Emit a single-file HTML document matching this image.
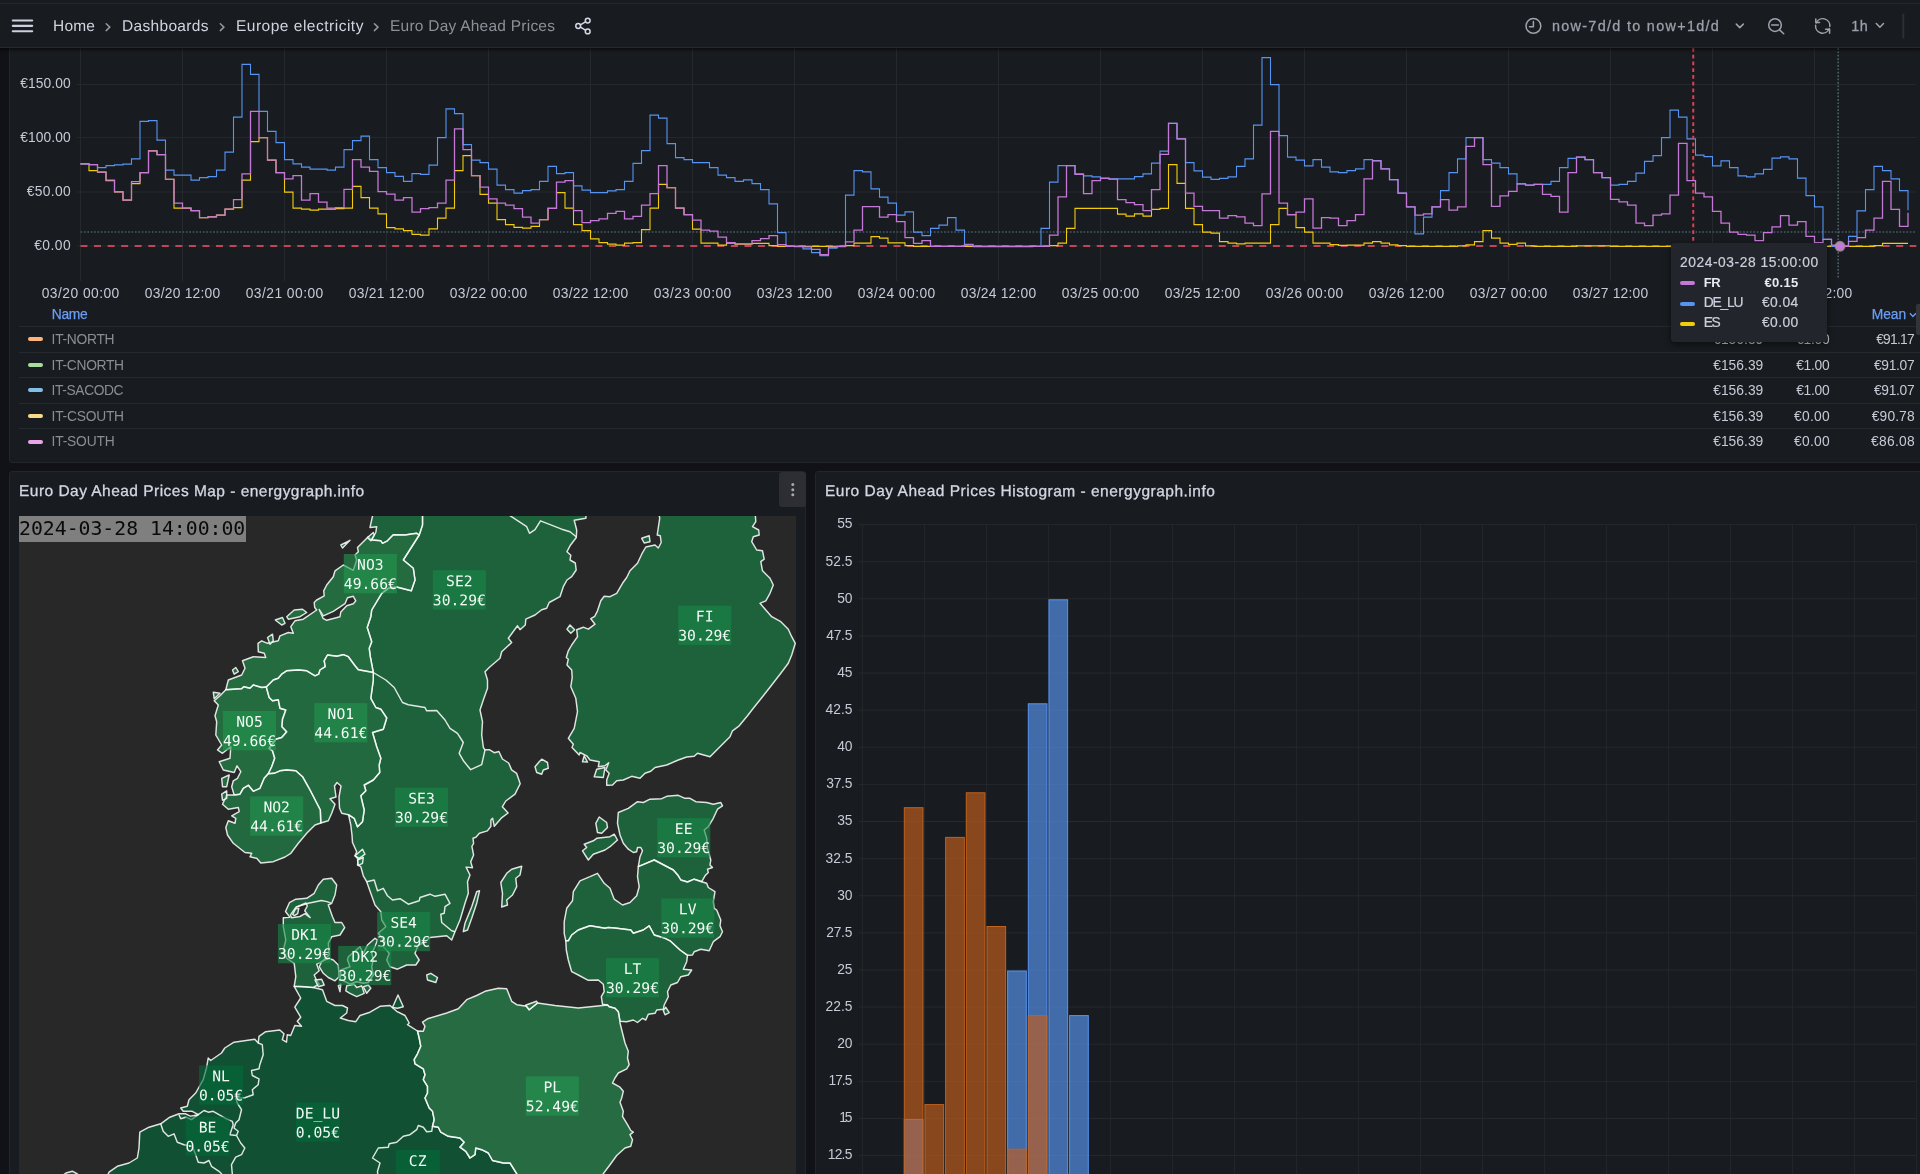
<!DOCTYPE html><html lang="en"><head><meta charset="utf-8"><title>Euro Day Ahead Prices - Grafana</title><style>
*{box-sizing:border-box}
html,body{margin:0;padding:0}
body{width:1920px;height:1174px;overflow:hidden;background:#111217;font-family:"Liberation Sans",sans-serif;color:#ccccdc;position:relative}
#root{position:absolute;left:0;top:0;width:1920px;height:1174px;overflow:hidden;will-change:transform}
.abs{position:absolute}
.t{position:absolute;white-space:nowrap;line-height:1}
.panel{position:absolute;background:#181b1f;border:1px solid #22252a}
#topbar{left:0;top:0;width:1920px;height:47.8px;background:#181b1f;border-bottom:1px solid #25282e;box-shadow:0 1px 3px 1px rgba(0,0,0,.55)}
.bc{font-size:15px;letter-spacing:.35px;top:18px;color:#d0d1dc}
.bcsep{font-size:15px;top:17px;color:#8e9097}
.ax{font-size:13px;letter-spacing:.45px;color:#c7c8d6}
.leg{font-size:13px;letter-spacing:.3px;color:#9fa1a9}
.legv{font-size:13px;letter-spacing:.45px;color:#c7c8d6;text-align:right}
.sw{position:absolute;width:15px;height:4px;border-radius:2px}
.sep{position:absolute;left:19px;width:1901px;height:1px;background:#25282d}
.ptitle{font-size:15px;font-weight:bold;letter-spacing:.1px;color:#d5d6e2}
.ml{position:absolute;font-family:"DejaVu Sans Mono","Liberation Mono",monospace;font-size:14px;line-height:19.3px;color:#fff;text-align:center;width:54px;height:39px;white-space:pre}
.hy{font-size:13px;letter-spacing:.5px;color:#c7c8d6;text-align:right;width:40px}
</style></head><body><div id="root">
<div class="panel" style="left:9.2px;top:40px;width:1920px;height:423.1px;border-radius:3px"></div>
<svg class="abs" style="left:0;top:0" width="1920" height="480" viewBox="0 0 1920 480"><line x1="80.5" y1="48" x2="80.5" y2="281" stroke="#25282d" stroke-width="1"/><line x1="182.5" y1="48" x2="182.5" y2="281" stroke="#25282d" stroke-width="1"/><line x1="284.5" y1="48" x2="284.5" y2="281" stroke="#25282d" stroke-width="1"/><line x1="386.5" y1="48" x2="386.5" y2="281" stroke="#25282d" stroke-width="1"/><line x1="488.5" y1="48" x2="488.5" y2="281" stroke="#25282d" stroke-width="1"/><line x1="590.5" y1="48" x2="590.5" y2="281" stroke="#25282d" stroke-width="1"/><line x1="692.5" y1="48" x2="692.5" y2="281" stroke="#25282d" stroke-width="1"/><line x1="794.5" y1="48" x2="794.5" y2="281" stroke="#25282d" stroke-width="1"/><line x1="896.5" y1="48" x2="896.5" y2="281" stroke="#25282d" stroke-width="1"/><line x1="998.5" y1="48" x2="998.5" y2="281" stroke="#25282d" stroke-width="1"/><line x1="1100.5" y1="48" x2="1100.5" y2="281" stroke="#25282d" stroke-width="1"/><line x1="1202.5" y1="48" x2="1202.5" y2="281" stroke="#25282d" stroke-width="1"/><line x1="1304.5" y1="48" x2="1304.5" y2="281" stroke="#25282d" stroke-width="1"/><line x1="1406.5" y1="48" x2="1406.5" y2="281" stroke="#25282d" stroke-width="1"/><line x1="1508.5" y1="48" x2="1508.5" y2="281" stroke="#25282d" stroke-width="1"/><line x1="1610.5" y1="48" x2="1610.5" y2="281" stroke="#25282d" stroke-width="1"/><line x1="1712.5" y1="48" x2="1712.5" y2="281" stroke="#25282d" stroke-width="1"/><line x1="1814.5" y1="48" x2="1814.5" y2="281" stroke="#25282d" stroke-width="1"/><line x1="76.7" y1="84.50" x2="1916.3" y2="84.50" stroke="#25282d" stroke-width="1"/><line x1="76.7" y1="137.60" x2="1916.3" y2="137.60" stroke="#25282d" stroke-width="1"/><line x1="76.7" y1="192.00" x2="1916.3" y2="192.00" stroke="#25282d" stroke-width="1"/><line x1="76.7" y1="245.90" x2="1916.3" y2="245.90" stroke="#25282d" stroke-width="1"/><line x1="80.5" y1="231.9" x2="1916.3" y2="231.9" stroke="#3a4a52" stroke-width="2" stroke-dasharray="1.7 1.7"/><line x1="80.5" y1="246" x2="1916.3" y2="246" stroke="#c04556" stroke-width="2" stroke-dasharray="7 6.55"/><path d="M80.5 163.90H89.0V170.65H97.5V172.15H106.0V180.65H114.5V191.90H123.0V200.15H131.5V183.65H140.0V172.65H148.5V150.90H157.0V154.65H165.5V179.40H174.0V208.15H182.5V208.15H191.0V210.65H199.5V217.65H208.0V216.90H216.5V215.15H225.0V209.15H233.5V207.65H242.0V180.15H250.5V141.65H259.0V137.65H267.5V160.15H276.0V172.65H284.5V192.15H293.0V208.15H301.5V209.15H310.0V210.15H318.5V209.15H327.0V209.15H335.5V208.65H344.0V208.15H352.5V186.40H361.0V197.65H369.5V208.15H378.0V213.90H386.5V227.65H395.0V228.90H403.5V230.65H412.0V234.40H420.5V235.15H429.0V228.90H437.5V218.15H446.0V208.15H454.5V170.65H463.0V155.65H471.5V175.65H480.0V194.40H488.5V203.15H497.0V219.65H505.5V224.65H514.0V227.40H522.5V228.15H531.0V226.40H539.5V219.65H548.0V208.40H556.5V192.65H565.0V208.15H573.5V224.65H582.0V230.65H590.5V238.90H599.0V242.65H607.5V244.15H616.0V245.15H624.5V243.15H633.0V242.65H641.5V229.65H650.0V208.15H658.5V184.40H667.0V187.65H675.5V208.15H684.0V214.65H692.5V229.15H701.0V243.15H709.5V243.15H718.0V245.15H726.5V243.15H735.0V244.15H743.5V244.15H752.0V243.40H760.5V243.40H769.0V245.65H777.5V246.40H786.0V246.40H794.5V246.40H803.0V246.40H811.5V246.40H820.0V246.40H828.5V246.40H837.0V246.40H845.5V245.65H854.0V243.15H862.5V243.15H871.0V236.65H879.5V238.15H888.0V242.90H896.5V242.90H905.0V245.65H913.5V246.40H922.0V246.40H930.5V246.40H939.0V246.40H947.5V246.40H956.0V246.40H964.5V246.40H973.0V246.40H981.5V246.40H990.0V246.40H998.5V246.40H1007.0V246.40H1015.5V246.40H1024.0V246.40H1032.5V246.40H1041.0V246.40H1049.5V245.65H1058.0V243.15H1066.5V228.40H1075.0V208.40H1083.5V208.40H1092.0V208.40H1100.5V208.40H1109.0V208.40H1117.5V214.15H1126.0V216.15H1134.5V213.90H1143.0V216.15H1151.5V209.40H1160.0V208.40H1168.5V164.65H1177.0V183.40H1185.5V208.40H1194.0V224.65H1202.5V232.15H1211.0V233.15H1219.5V241.65H1228.0V243.15H1236.5V243.90H1245.0V243.15H1253.5V243.15H1262.0V243.15H1270.5V224.65H1279.0V208.40H1287.5V214.65H1296.0V227.65H1304.5V232.15H1313.0V243.15H1321.5V243.15H1330.0V244.65H1338.5V245.40H1347.0V245.15H1355.5V245.15H1364.0V243.15H1372.5V241.65H1381.0V243.15H1389.5V244.90H1398.0V245.65H1406.5V246.40H1415.0V246.40H1423.5V246.40H1432.0V246.40H1440.5V246.40H1449.0V246.40H1457.5V245.90H1466.0V244.90H1474.5V241.65H1483.0V230.65H1491.5V238.15H1500.0V243.15H1508.5V244.40H1517.0V243.15H1525.5V245.90H1534.0V246.40H1542.5V246.40H1551.0V246.40H1559.5V246.40H1568.0V246.40H1576.5V245.90H1585.0V245.90H1593.5V245.90H1602.0V245.90H1610.5V246.40H1619.0V246.40H1627.5V246.40H1636.0V246.40H1644.5V246.40H1653.0V246.40H1661.5V246.40H1670.0V246.40H1678.5V246.40H1687.0V246.40H1695.5V246.40H1704.0V246.40H1712.5V246.40H1721.0V246.40H1729.5V246.40H1738.0V246.40H1746.5V246.40H1755.0V246.40H1763.5V246.40H1772.0V246.40H1780.5V246.40H1789.0V246.40H1797.5V246.40H1806.0V246.40H1814.5V246.40H1823.0V246.40H1831.5V246.40H1840.0V246.40H1848.5V246.40H1857.0V246.40H1865.5V246.40H1874.0V245.65H1882.5V243.40H1891.0V243.40H1899.5V243.40H1908.0" fill="none" stroke="#f2cc0c" stroke-width="1.1"/><path d="M80.5 163.90H89.0V164.65H97.5V167.65H106.0V165.65H114.5V164.90H123.0V164.15H131.5V158.90H140.0V121.40H148.5V120.65H157.0V140.15H165.5V170.15H174.0V175.15H182.5V175.15H191.0V180.15H199.5V177.65H208.0V176.65H216.5V170.15H225.0V152.15H233.5V117.15H242.0V64.40H250.5V74.40H259.0V111.40H267.5V131.40H276.0V142.65H284.5V159.65H293.0V163.90H301.5V167.15H310.0V169.15H318.5V169.15H327.0V170.15H335.5V167.15H344.0V149.65H352.5V140.65H361.0V136.15H369.5V159.65H378.0V167.65H386.5V172.65H395.0V176.40H403.5V181.40H412.0V173.65H420.5V174.40H429.0V165.15H437.5V137.65H446.0V108.90H454.5V113.65H463.0V144.65H471.5V160.15H480.0V162.65H488.5V169.15H497.0V185.15H505.5V189.65H514.0V193.15H522.5V190.65H531.0V189.65H539.5V181.40H548.0V166.40H556.5V173.65H565.0V172.65H573.5V185.90H582.0V190.15H590.5V192.65H599.0V192.65H607.5V190.90H616.0V189.65H624.5V181.40H633.0V163.40H641.5V150.65H650.0V115.15H658.5V118.15H667.0V143.65H675.5V157.65H684.0V159.65H692.5V162.65H701.0V162.65H709.5V167.65H718.0V175.15H726.5V177.65H735.0V181.40H743.5V179.90H752.0V183.65H760.5V189.65H769.0V203.90H777.5V232.65H786.0V245.90H794.5V246.65H803.0V248.90H811.5V252.65H820.0V255.65H828.5V248.15H837.0V246.65H845.5V195.15H854.0V170.65H862.5V171.90H871.0V188.90H879.5V197.15H888.0V203.15H896.5V215.15H905.0V211.90H913.5V232.15H922.0V235.65H930.5V228.40H939.0V225.15H947.5V217.65H956.0V230.15H964.5V244.40H973.0V246.40H981.5V246.40H990.0V246.40H998.5V246.40H1007.0V246.40H1015.5V246.40H1024.0V246.40H1032.5V246.40H1041.0V228.40H1049.5V182.15H1058.0V165.65H1066.5V165.65H1075.0V173.90H1083.5V175.90H1092.0V176.90H1100.5V178.15H1109.0V178.90H1117.5V178.90H1126.0V178.90H1134.5V176.65H1143.0V173.90H1151.5V163.15H1160.0V151.15H1168.5V123.40H1177.0V138.90H1185.5V162.65H1194.0V170.90H1202.5V177.15H1211.0V179.40H1219.5V178.40H1228.0V176.90H1236.5V166.40H1245.0V158.90H1253.5V125.15H1262.0V57.65H1270.5V84.65H1279.0V135.65H1287.5V157.15H1296.0V160.15H1304.5V165.90H1313.0V159.65H1321.5V167.15H1330.0V171.90H1338.5V172.65H1347.0V170.65H1355.5V168.90H1364.0V159.65H1372.5V160.65H1381.0V168.90H1389.5V179.65H1398.0V193.15H1406.5V206.90H1415.0V233.90H1423.5V217.15H1432.0V206.90H1440.5V190.65H1449.0V172.65H1457.5V158.90H1466.0V137.65H1474.5V137.65H1483.0V159.65H1491.5V163.15H1500.0V167.65H1508.5V173.90H1517.0V183.90H1525.5V185.15H1534.0V184.40H1542.5V184.40H1551.0V181.40H1559.5V167.65H1568.0V158.40H1576.5V157.15H1585.0V159.65H1593.5V172.65H1602.0V177.65H1610.5V185.15H1619.0V184.40H1627.5V181.40H1636.0V173.15H1644.5V161.40H1653.0V155.65H1661.5V137.65H1670.0V110.15H1678.5V117.15H1687.0V138.90H1695.5V155.15H1704.0V156.65H1712.5V165.90H1721.0V160.90H1729.5V167.65H1738.0V175.90H1746.5V176.90H1755.0V173.90H1763.5V169.40H1772.0V158.15H1780.5V156.90H1789.0V158.90H1797.5V178.15H1806.0V195.65H1814.5V206.90H1823.0V239.40H1831.5V246.40H1840.0V246.40H1848.5V236.40H1857.0V210.90H1865.5V189.65H1874.0V166.40H1882.5V170.65H1891.0V178.90H1899.5V190.65H1908.0V210.15" fill="none" stroke="#5794f2" stroke-width="1.1"/><path d="M80.5 163.90H89.0V164.65H97.5V172.15H106.0V180.15H114.5V191.90H123.0V200.15H131.5V181.65H140.0V172.65H148.5V150.90H157.0V154.65H165.5V179.40H174.0V203.15H182.5V208.15H191.0V210.65H199.5V217.65H208.0V216.90H216.5V215.15H225.0V209.15H233.5V199.65H242.0V173.90H250.5V111.40H259.0V137.65H267.5V160.15H276.0V172.65H284.5V178.90H293.0V175.65H301.5V200.15H310.0V193.65H318.5V202.15H327.0V208.15H335.5V207.65H344.0V189.40H352.5V159.65H361.0V167.15H369.5V171.40H378.0V191.65H386.5V194.15H395.0V200.15H403.5V197.65H412.0V212.15H420.5V208.65H429.0V207.65H437.5V203.15H446.0V180.15H454.5V128.90H463.0V149.65H471.5V175.65H480.0V187.15H488.5V198.90H497.0V203.15H505.5V205.15H514.0V208.65H522.5V217.15H531.0V223.15H539.5V219.65H548.0V208.40H556.5V182.15H565.0V180.65H573.5V210.65H582.0V222.65H590.5V220.65H599.0V218.90H607.5V213.40H616.0V211.40H624.5V218.90H633.0V216.40H641.5V205.15H650.0V193.65H658.5V165.65H667.0V187.65H675.5V208.15H684.0V214.65H692.5V220.15H701.0V230.15H709.5V231.15H718.0V237.15H726.5V242.65H735.0V243.90H743.5V243.90H752.0V240.65H760.5V238.65H769.0V235.65H777.5V244.65H786.0V246.40H794.5V246.40H803.0V246.90H811.5V249.40H820.0V254.65H828.5V247.15H837.0V246.40H845.5V241.90H854.0V230.15H862.5V206.65H871.0V206.65H879.5V217.15H888.0V214.65H896.5V221.65H905.0V237.65H913.5V243.40H922.0V240.65H930.5V246.40H939.0V246.40H947.5V246.40H956.0V246.40H964.5V244.90H973.0V246.65H981.5V246.65H990.0V246.65H998.5V246.65H1007.0V246.65H1015.5V246.65H1024.0V246.65H1032.5V246.40H1041.0V246.40H1049.5V235.15H1058.0V196.90H1066.5V165.65H1075.0V174.40H1083.5V193.65H1092.0V180.65H1100.5V178.40H1109.0V179.15H1117.5V199.65H1126.0V202.65H1134.5V204.65H1143.0V210.65H1151.5V189.65H1160.0V154.40H1168.5V123.40H1177.0V138.90H1185.5V193.15H1194.0V206.40H1202.5V210.65H1211.0V210.65H1219.5V218.15H1228.0V215.65H1236.5V216.90H1245.0V223.15H1253.5V225.65H1262.0V193.90H1270.5V131.40H1279.0V203.15H1287.5V214.65H1296.0V212.15H1304.5V198.90H1313.0V228.15H1321.5V217.65H1330.0V218.15H1338.5V225.65H1347.0V220.65H1355.5V214.65H1364.0V178.90H1372.5V160.90H1381.0V168.90H1389.5V179.65H1398.0V193.15H1406.5V206.90H1415.0V215.15H1423.5V213.90H1432.0V206.90H1440.5V199.65H1449.0V210.15H1457.5V206.90H1466.0V146.40H1474.5V137.65H1483.0V164.65H1491.5V206.40H1500.0V195.90H1508.5V191.40H1517.0V183.90H1525.5V185.15H1534.0V184.40H1542.5V194.40H1551.0V196.40H1559.5V212.15H1568.0V172.65H1576.5V157.15H1585.0V159.65H1593.5V172.65H1602.0V177.65H1610.5V199.40H1619.0V201.90H1627.5V205.15H1636.0V223.15H1644.5V225.65H1653.0V215.15H1661.5V213.90H1670.0V195.15H1678.5V143.40H1687.0V180.65H1695.5V193.15H1704.0V196.90H1712.5V211.40H1721.0V223.15H1729.5V232.15H1738.0V234.40H1746.5V235.15H1755.0V240.65H1763.5V232.65H1772.0V226.90H1780.5V215.65H1789.0V225.15H1797.5V221.65H1806.0V236.40H1814.5V242.65H1823.0V239.40H1831.5V245.15H1840.0V246.40H1848.5V241.40H1857.0V237.65H1865.5V230.15H1874.0V218.15H1882.5V181.40H1891.0V209.40H1899.5V226.40H1908.0V212.65" fill="none" stroke="#c678d8" stroke-width="1.3"/><line x1="1693.25" y1="48" x2="1693.25" y2="245" stroke="#d74155" stroke-width="2" stroke-dasharray="3.7 3.05"/><line x1="1838.2" y1="48" x2="1838.2" y2="278" stroke="#4b5f64" stroke-width="1.6" stroke-dasharray="1.7 1.7"/><circle cx="1840" cy="246.3" r="4.5" fill="#c678d8" stroke="#a98fa0" stroke-opacity=".75" stroke-width="2"/></svg>
<div class="t" style="left:-329.30px;width:400.09px;text-align:right;top:76.90px;font-size:13.8px;letter-spacing:0.085px;color:#c8c9d6;">€150.00</div>
<div class="t" style="left:-329.30px;width:400.09px;text-align:right;top:130.90px;font-size:13.8px;letter-spacing:0.085px;color:#c8c9d6;">€100.00</div>
<div class="t" style="left:-329.30px;width:400.35px;text-align:right;top:184.90px;font-size:13.8px;letter-spacing:0.354px;color:#c8c9d6;">€50.00</div>
<div class="t" style="left:-329.30px;width:400.51px;text-align:right;top:238.90px;font-size:13.8px;letter-spacing:0.508px;color:#c8c9d6;">€0.00</div>
<div class="t" style="left:-69.27px;width:300px;text-align:center;top:286.90px;font-size:13.8px;letter-spacing:0.467px;color:#c8c9d6">03/20 00:00</div>
<div class="t" style="left:32.62px;width:300px;text-align:center;top:286.90px;font-size:13.8px;letter-spacing:0.247px;color:#c8c9d6">03/20 12:00</div>
<div class="t" style="left:134.73px;width:300px;text-align:center;top:286.90px;font-size:13.8px;letter-spacing:0.467px;color:#c8c9d6">03/21 00:00</div>
<div class="t" style="left:236.62px;width:300px;text-align:center;top:286.90px;font-size:13.8px;letter-spacing:0.247px;color:#c8c9d6">03/21 12:00</div>
<div class="t" style="left:338.73px;width:300px;text-align:center;top:286.90px;font-size:13.8px;letter-spacing:0.467px;color:#c8c9d6">03/22 00:00</div>
<div class="t" style="left:440.62px;width:300px;text-align:center;top:286.90px;font-size:13.8px;letter-spacing:0.247px;color:#c8c9d6">03/22 12:00</div>
<div class="t" style="left:542.73px;width:300px;text-align:center;top:286.90px;font-size:13.8px;letter-spacing:0.467px;color:#c8c9d6">03/23 00:00</div>
<div class="t" style="left:644.62px;width:300px;text-align:center;top:286.90px;font-size:13.8px;letter-spacing:0.247px;color:#c8c9d6">03/23 12:00</div>
<div class="t" style="left:746.73px;width:300px;text-align:center;top:286.90px;font-size:13.8px;letter-spacing:0.467px;color:#c8c9d6">03/24 00:00</div>
<div class="t" style="left:848.62px;width:300px;text-align:center;top:286.90px;font-size:13.8px;letter-spacing:0.247px;color:#c8c9d6">03/24 12:00</div>
<div class="t" style="left:950.73px;width:300px;text-align:center;top:286.90px;font-size:13.8px;letter-spacing:0.467px;color:#c8c9d6">03/25 00:00</div>
<div class="t" style="left:1052.62px;width:300px;text-align:center;top:286.90px;font-size:13.8px;letter-spacing:0.247px;color:#c8c9d6">03/25 12:00</div>
<div class="t" style="left:1154.73px;width:300px;text-align:center;top:286.90px;font-size:13.8px;letter-spacing:0.467px;color:#c8c9d6">03/26 00:00</div>
<div class="t" style="left:1256.62px;width:300px;text-align:center;top:286.90px;font-size:13.8px;letter-spacing:0.247px;color:#c8c9d6">03/26 12:00</div>
<div class="t" style="left:1358.73px;width:300px;text-align:center;top:286.90px;font-size:13.8px;letter-spacing:0.467px;color:#c8c9d6">03/27 00:00</div>
<div class="t" style="left:1460.62px;width:300px;text-align:center;top:286.90px;font-size:13.8px;letter-spacing:0.247px;color:#c8c9d6">03/27 12:00</div>
<div class="t" style="left:1562.73px;width:300px;text-align:center;top:286.90px;font-size:13.8px;letter-spacing:0.467px;color:#c8c9d6">03/28 00:00</div>
<div class="t" style="left:1664.62px;width:300px;text-align:center;top:286.90px;font-size:13.8px;letter-spacing:0.247px;color:#c8c9d6">03/28 12:00</div>
<div class="t" style="left:51.80px;top:307.90px;font-size:13.8px;letter-spacing:-0.282px;color:#6a9df5;-webkit-text-stroke:.25px #6a9df5;">Name</div>
<div class="t" style="left:1506.10px;width:399.90px;text-align:right;top:307.90px;font-size:13.8px;letter-spacing:-0.100px;color:#6a9df5;-webkit-text-stroke:.25px #6a9df5;">Mean</div>
<svg class="abs" style="left:1908px;top:310px" width="10" height="9" viewBox="0 0 10 9"><path d="M1.9 3.3 L4.9 6.4 L7.9 3.3" fill="none" stroke="#6a9df5" stroke-width="1.4"/></svg>
<div class="sep" style="top:326.00px"></div>
<div class="sw" style="left:27.8px;top:337.30px;background:#ffb27a"></div>
<div class="t" style="left:51.60px;top:332.90px;font-size:13.8px;letter-spacing:-0.276px;color:#8b8d95;">IT-NORTH</div>
<div class="t" style="left:1363.30px;width:400.04px;text-align:right;top:332.90px;font-size:13.8px;letter-spacing:0.035px;color:#c8c9d6;">€156.39</div>
<div class="t" style="left:1429.60px;width:399.71px;text-align:right;top:332.90px;font-size:13.8px;letter-spacing:-0.292px;color:#c8c9d6;">€1.00</div>
<div class="t" style="left:1514.60px;width:399.23px;text-align:right;top:332.90px;font-size:13.8px;letter-spacing:-0.766px;color:#c8c9d6;">€91.17</div>
<div class="sep" style="top:351.55px"></div>
<div class="sw" style="left:27.8px;top:362.85px;background:#a8dc9c"></div>
<div class="t" style="left:51.60px;top:358.90px;font-size:13.8px;letter-spacing:-0.296px;color:#8b8d95;">IT-CNORTH</div>
<div class="t" style="left:1363.30px;width:400.04px;text-align:right;top:358.90px;font-size:13.8px;letter-spacing:0.035px;color:#c8c9d6;">€156.39</div>
<div class="t" style="left:1429.60px;width:399.71px;text-align:right;top:358.90px;font-size:13.8px;letter-spacing:-0.292px;color:#c8c9d6;">€1.00</div>
<div class="t" style="left:1514.60px;width:399.67px;text-align:right;top:358.90px;font-size:13.8px;letter-spacing:-0.326px;color:#c8c9d6;">€91.07</div>
<div class="sep" style="top:377.10px"></div>
<div class="sw" style="left:27.8px;top:388.40px;background:#82bfe6"></div>
<div class="t" style="left:51.60px;top:383.90px;font-size:13.8px;letter-spacing:-0.393px;color:#8b8d95;">IT-SACODC</div>
<div class="t" style="left:1363.30px;width:400.04px;text-align:right;top:383.90px;font-size:13.8px;letter-spacing:0.035px;color:#c8c9d6;">€156.39</div>
<div class="t" style="left:1429.60px;width:399.71px;text-align:right;top:383.90px;font-size:13.8px;letter-spacing:-0.292px;color:#c8c9d6;">€1.00</div>
<div class="t" style="left:1514.60px;width:399.67px;text-align:right;top:383.90px;font-size:13.8px;letter-spacing:-0.326px;color:#c8c9d6;">€91.07</div>
<div class="sep" style="top:402.65px"></div>
<div class="sw" style="left:27.8px;top:413.95px;background:#fbd98a"></div>
<div class="t" style="left:51.60px;top:409.90px;font-size:13.8px;letter-spacing:-0.235px;color:#8b8d95;">IT-CSOUTH</div>
<div class="t" style="left:1363.30px;width:400.04px;text-align:right;top:409.90px;font-size:13.8px;letter-spacing:0.035px;color:#c8c9d6;">€156.39</div>
<div class="t" style="left:1429.60px;width:400.26px;text-align:right;top:409.90px;font-size:13.8px;letter-spacing:0.258px;color:#c8c9d6;">€0.00</div>
<div class="t" style="left:1514.60px;width:400.11px;text-align:right;top:409.90px;font-size:13.8px;letter-spacing:0.114px;color:#c8c9d6;">€90.78</div>
<div class="sep" style="top:428.20px"></div>
<div class="sw" style="left:27.8px;top:439.50px;background:#eaa5e6"></div>
<div class="t" style="left:51.60px;top:434.90px;font-size:13.8px;letter-spacing:-0.197px;color:#8b8d95;">IT-SOUTH</div>
<div class="t" style="left:1363.30px;width:400.04px;text-align:right;top:434.90px;font-size:13.8px;letter-spacing:0.035px;color:#c8c9d6;">€156.39</div>
<div class="t" style="left:1429.60px;width:400.26px;text-align:right;top:434.90px;font-size:13.8px;letter-spacing:0.258px;color:#c8c9d6;">€0.00</div>
<div class="t" style="left:1514.60px;width:400.25px;text-align:right;top:434.90px;font-size:13.8px;letter-spacing:0.254px;color:#c8c9d6;">€86.08</div>
<div class="abs" style="left:1916px;top:303.5px;width:8px;height:31.5px;border-radius:2px;background:#32343a"></div>
<div class="abs" style="left:1671.2px;top:242.5px;width:156px;height:99px;background:#22252b;border-radius:3px;box-shadow:0 2px 6px rgba(0,0,0,.55)"></div>
<div class="t" style="left:1680.00px;top:255.90px;font-size:13.8px;letter-spacing:0.554px;color:#cdcedc;-webkit-text-stroke:.2px #cdcedc;">2024-03-28 15:00:00</div>
<div class="sw" style="left:1680px;top:281.40px;background:#c678d8"></div>
<div class="t" style="left:1703.70px;top:276.30px;font-size:13.0px;letter-spacing:-0.350px;color:#e8e9f2;font-weight:bold;">FR</div>
<div class="t" style="left:1398.20px;width:400.31px;text-align:right;top:276.30px;font-size:13.0px;letter-spacing:0.309px;color:#e8e9f2;font-weight:bold;">€0.15</div>
<div class="sw" style="left:1680px;top:301.60px;background:#5794f2"></div>
<div class="t" style="left:1703.70px;top:295.90px;font-size:13.8px;letter-spacing:-1.201px;color:#cdcedc;-webkit-text-stroke:.2px #cdcedc;">DE_LU</div>
<div class="t" style="left:1398.20px;width:400.41px;text-align:right;top:295.90px;font-size:13.8px;letter-spacing:0.408px;color:#cdcedc;-webkit-text-stroke:.2px #cdcedc;">€0.04</div>
<div class="sw" style="left:1680px;top:321.90px;background:#f2cc0c"></div>
<div class="t" style="left:1703.70px;top:315.90px;font-size:13.8px;letter-spacing:-1.423px;color:#cdcedc;-webkit-text-stroke:.2px #cdcedc;">ES</div>
<div class="t" style="left:1398.20px;width:400.41px;text-align:right;top:315.90px;font-size:13.8px;letter-spacing:0.408px;color:#cdcedc;-webkit-text-stroke:.2px #cdcedc;">€0.00</div>
<div id="topbar" class="abs"></div>
<div class="abs" style="left:0;top:2.9px;width:1920px;height:1px;background:#25272d"></div>
<svg class="abs" style="left:0;top:0" width="1920" height="48" viewBox="0 0 1920 48" fill="none" stroke-linecap="round" stroke-linejoin="round"><g stroke="#cfcedf" stroke-width="2.1" stroke-linecap="round"><path d="M12.8 20.45H32.2M12.8 25.85H32.2M12.8 31.25H32.2"/></g><g stroke="#9496a3" stroke-width="1.5"><path d="M106.2 23.7l3.6 3.45-3.6 3.45M220.3 23.7l3.6 3.45-3.6 3.45M374.4 23.7l3.6 3.45-3.6 3.45"/></g><g stroke="#d7d6e4" stroke-width="1.5"><circle cx="587.7" cy="20.6" r="2.4"/><circle cx="587.7" cy="31.4" r="2.4"/><circle cx="578.2" cy="26" r="2.4"/><path d="M580.4 24.8l5.1-3M580.4 27.2l5.1 3"/></g><g stroke="#a0a2ad" stroke-width="1.5"><circle cx="1533.4" cy="25.9" r="7.4"/><path d="M1533.4 21.6V26.7H1529.5"/></g><g stroke="#a0a2ad" stroke-width="1.5"><path d="M1736.3 24.1l3.5 3.5 3.5-3.5M1876.3 23.5l3.6 3.7 3.6-3.7"/></g><g stroke="#a0a2ad" stroke-width="1.5"><circle cx="1775" cy="25.1" r="6.3"/><path d="M1771.6 25.1H1778.4M1779.6 29.9L1783.7 33.7"/></g><g stroke="#a0a2ad" stroke-width="1.5"><path d="M1815.8 18.9V22.6H1819.6M1829.6 33.3V29.3H1825.6"/><path d="M1816.2 23A7.1 7.1 0 0 1 1829.8 26.5M1829.2 28.8A7.1 7.1 0 0 1 1815.6 25.3"/></g><path d="M1903.3 13.8V38.4" stroke="#2d2f36" stroke-width="2" stroke-linecap="butt"/></svg>
<div class="t" style="left:53.00px;top:17.85px;font-size:15.5px;letter-spacing:0.205px;color:#d2d3de;transform:rotate(.04deg);transform-origin:0 50%;">Home</div>
<div class="t" style="left:122.20px;top:17.85px;font-size:15.5px;letter-spacing:0.317px;color:#d2d3de;transform:rotate(.04deg);transform-origin:0 50%;">Dashboards</div>
<div class="t" style="left:235.50px;top:17.85px;font-size:15.5px;letter-spacing:0.501px;color:#d2d3de;transform:rotate(.04deg);transform-origin:0 50%;">Europe electricity</div>
<div class="t" style="left:390.00px;top:17.85px;font-size:15.5px;letter-spacing:0.236px;color:#8e8f98;transform:rotate(.04deg);transform-origin:0 50%;">Euro Day Ahead Prices</div>
<div class="t" style="left:1551.90px;top:19.10px;font-size:14.4px;letter-spacing:1.314px;color:#9d9faa;-webkit-text-stroke:.3px #9d9faa;">now-7d/d to now+1d/d</div>
<div class="t" style="left:1851.20px;top:19.10px;font-size:14.4px;letter-spacing:0.500px;color:#9d9faa;-webkit-text-stroke:.3px #9d9faa;">1h</div>
<div class="panel" style="left:9.2px;top:471.4px;width:796.8px;height:720px;border-radius:3px"></div>
<div class="t" style="left:19.20px;top:482.95px;font-size:15.5px;letter-spacing:0.470px;color:#d5d6e2;-webkit-text-stroke:.3px #d5d6e2;transform:rotate(.04deg);transform-origin:0 50%;">Euro Day Ahead Prices Map - energygraph.info</div>
<div class="abs" style="left:779px;top:471.6px;width:27px;height:35px;background:#2c2e34;border-radius:3px"></div>
<svg class="abs" style="left:779px;top:472px" width="27" height="35"><g fill="#a6a8b6"><circle cx="13.8" cy="12.5" r="1.5"/><circle cx="13.8" cy="17.7" r="1.5"/><circle cx="13.8" cy="22.8" r="1.5"/></g></svg>
<div class="abs" style="left:19px;top:515.8px;width:776.9px;height:660px;background:#282828;overflow:hidden">
<svg style="position:absolute;left:0;top:0" width="777" height="660" viewBox="19 516 777 660"><g stroke="#ffffff" stroke-width="1.45" stroke-opacity=".86" stroke-linejoin="round"><polygon points="422.5,510.0 422.5,525.0 419.2,535.0 403.3,560.0 413.3,568.3 415.0,580.0 411.3,590.8 396.7,587.0 388.3,588.3 381.7,593.3 371.7,610.0 370.8,616.7 367.2,627.5 371.7,641.7 369.2,648.3 370.3,656.7 373.3,672.5 373.3,680.0 370.8,698.3 375.8,707.5 380.8,709.2 386.7,718.0 383.3,729.2 372.5,732.5 376.7,746.7 380.8,758.3 379.2,765.0 379.7,772.5 373.3,780.0 364.2,785.0 365.8,790.8 360.8,795.8 364.2,810.0 362.5,821.7 357.5,826.7 354.2,818.3 348.5,814.7 350.8,825.0 352.0,835.0 352.5,842.5 356.7,851.7 355.0,855.8 358.3,859.2 357.5,865.0 360.8,866.7 363.3,875.8 366.7,881.7 370.8,893.3 375.0,905.0 380.8,911.7 381.7,920.0 385.8,926.7 378.3,933.3 385.0,941.7 383.3,946.7 389.2,953.3 386.7,960.0 390.0,966.7 397.5,969.2 406.7,965.0 415.8,965.0 419.2,960.0 415.0,953.3 418.3,945.0 423.3,943.3 430.0,937.5 446.7,935.8 451.7,940.0 455.0,931.7 460.0,920.0 465.0,903.3 468.3,893.3 467.5,881.7 470.0,875.0 466.1,867.1 472.5,867.7 470.7,861.9 473.6,855.0 471.9,846.4 473.6,843.5 473.0,838.3 475.9,837.2 479.4,833.2 487.4,830.9 490.9,826.3 490.9,819.9 492.6,818.2 494.3,826.3 501.2,818.2 508.1,813.0 502.4,806.7 505.8,801.0 515.0,794.1 520.2,783.7 516.7,773.4 511.6,769.9 508.7,763.0 502.4,759.0 498.9,751.5 494.3,752.7 489.7,749.8 485.0,749.8 483.4,747.5 481.7,735.0 482.5,721.7 480.0,710.0 483.3,700.0 487.5,688.3 487.5,680.0 485.0,671.7 490.0,666.7 500.0,658.3 501.7,651.7 511.7,642.5 508.3,638.3 517.5,625.8 520.0,629.7 525.3,625.0 525.8,619.2 535.0,615.0 541.7,609.7 546.7,608.3 549.2,602.5 560.0,596.7 563.3,586.7 567.0,580.0 571.7,576.7 576.2,570.0 575.3,563.0 570.0,560.0 570.8,555.3 567.0,551.7 570.0,545.8 576.3,537.5 576.7,530.0 574.2,520.3 585.8,518.3 586.7,510.0" fill="#188847" fill-opacity="0.6" /><polygon points="658.3,510.0 659.7,518.3 657.2,535.0 660.3,535.8 661.2,542.5 658.3,548.0 655.0,545.0 645.8,547.0 641.7,554.2 637.5,563.3 630.0,570.8 626.7,577.5 622.5,583.3 616.7,593.3 610.0,596.7 604.2,596.3 600.8,600.8 597.5,610.8 594.7,616.3 590.8,618.7 595.0,624.2 588.3,629.2 583.3,627.2 576.7,629.7 577.5,636.7 571.7,645.0 568.3,650.8 566.3,657.5 568.3,659.2 567.0,665.0 571.7,670.0 572.2,677.5 570.8,686.7 575.8,698.3 577.5,711.7 574.2,728.3 568.3,738.3 573.3,744.2 572.0,747.5 579.2,755.0 580.0,752.5 586.7,755.8 590.0,760.0 599.2,761.7 598.3,766.7 605.0,765.8 608.7,762.8 605.8,770.0 609.2,773.3 606.7,780.0 606.7,785.3 612.5,785.0 616.7,780.8 623.3,780.0 631.7,776.3 640.0,778.3 645.0,773.3 650.8,771.3 655.0,767.5 666.7,765.0 678.3,760.0 686.7,757.0 694.2,756.3 697.5,753.3 710.0,756.7 715.0,751.7 730.0,736.7 732.5,730.8 739.2,725.8 747.5,715.8 752.5,709.2 763.3,695.8 771.7,685.0 780.8,673.3 788.3,663.3 791.7,655.0 795.3,643.3 791.7,636.7 788.3,629.2 780.8,621.7 771.7,616.7 760.0,603.3 765.8,600.8 770.0,593.3 773.3,585.0 770.0,578.3 762.5,570.8 760.8,561.7 764.2,559.2 762.5,550.8 756.7,550.0 751.7,541.7 753.3,536.7 759.2,535.0 758.7,530.0 752.5,526.7 755.8,521.7 755.0,510.0" fill="#188847" fill-opacity="0.6" /><polygon points="372.5,510.0 372.5,516.0 370.0,527.5 376.7,526.7 375.8,532.5 371.7,540.0 380.8,540.8 382.5,543.3 387.5,540.8 393.3,534.7 405.0,535.0 416.7,533.3 419.2,535.0 422.5,525.0 422.5,510.0" fill="#188847" fill-opacity="0.6" /><polygon points="371.7,540.0 380.8,540.8 382.5,543.3 387.5,540.8 393.3,534.7 405.0,535.0 416.7,533.3 419.2,535.0 403.3,560.0 413.3,568.3 415.0,580.0 411.3,590.8 396.7,587.0 388.3,588.3 381.7,593.3 371.7,610.0 370.8,616.7 367.2,627.5 371.7,641.7 369.2,648.3 370.3,656.7 373.3,672.5 358.3,669.7 355.0,665.8 348.3,656.7 343.3,654.7 336.7,656.3 327.5,655.0 324.2,660.8 325.3,666.7 320.0,670.0 318.7,674.2 315.0,675.8 306.7,670.8 298.3,670.0 286.7,670.8 281.7,674.2 278.3,678.3 273.3,680.0 266.3,687.0 261.7,687.5 253.3,685.0 250.0,688.3 243.7,686.7 241.7,688.7 225.8,689.7 228.3,680.0 241.7,675.0 245.0,668.3 242.5,660.8 253.3,656.7 265.8,657.5 264.2,653.3 258.3,651.7 258.0,643.3 261.7,640.8 267.5,643.3 278.3,640.8 280.0,635.8 288.3,632.5 293.3,633.3 290.8,626.7 295.0,620.8 303.3,619.2 316.7,610.0 314.7,607.5 314.2,602.5 316.7,600.0 324.2,595.8 323.7,590.8 326.7,585.0 333.3,576.7 335.0,570.8 343.3,565.0 353.3,570.3 356.7,560.0 355.0,555.0 358.3,551.7 357.5,547.5 368.3,536.7 371.7,540.0" fill="#22984f" fill-opacity="0.6" /><polygon points="225.8,689.7 241.7,688.7 243.7,686.7 250.0,688.3 253.3,685.0 261.7,687.5 266.3,687.0 269.2,697.5 272.5,700.8 278.3,699.7 280.0,708.3 285.8,710.0 282.5,719.2 282.0,726.7 286.7,731.7 281.7,737.5 275.8,739.2 269.2,748.3 272.5,750.8 274.7,758.3 271.7,766.7 268.3,773.7 264.2,778.3 260.0,788.3 253.3,791.3 248.3,785.3 243.3,788.3 240.0,794.2 234.2,795.0 231.7,786.7 233.3,780.8 237.5,778.3 240.8,771.7 237.0,765.8 234.2,772.5 223.3,770.0 219.2,761.7 230.0,758.3 230.8,746.7 222.5,753.3 217.5,750.0 221.7,745.0 215.8,735.0 216.7,721.7 215.0,715.8 218.3,705.0 214.2,700.8 220.0,695.8 225.8,689.7" fill="#22984f" fill-opacity="0.6" /><polygon points="266.3,687.0 273.3,680.0 278.3,678.3 281.7,674.2 286.7,670.8 298.3,670.0 306.7,670.8 315.0,675.8 318.7,674.2 320.0,670.0 325.3,666.7 324.2,660.8 327.5,655.0 336.7,656.3 343.3,654.7 348.3,656.7 355.0,665.8 358.3,669.7 373.3,672.5 373.3,680.0 370.8,698.3 375.8,707.5 380.8,709.2 386.7,718.0 383.3,729.2 372.5,732.5 376.7,746.7 380.8,758.3 379.2,765.0 379.7,772.5 373.3,780.0 364.2,785.0 365.8,790.8 360.8,795.8 364.2,810.0 362.5,821.7 357.5,826.7 354.2,818.3 348.5,814.7 341.7,813.3 339.5,808.0 339.0,797.0 341.0,786.0 337.0,782.5 334.5,786.0 336.0,797.0 330.0,798.7 335.0,804.2 331.7,813.3 328.3,820.8 320.8,823.0 320.3,810.0 310.0,790.0 306.7,784.2 302.5,776.7 295.8,770.8 286.7,770.0 280.0,770.8 274.2,773.3 268.3,773.7 271.7,766.7 274.7,758.3 272.5,750.8 269.2,748.3 275.8,739.2 281.7,737.5 286.7,731.7 282.0,726.7 282.5,719.2 285.8,710.0 280.0,708.3 278.3,699.7 272.5,700.8 269.2,697.5 266.3,687.0" fill="#20954e" fill-opacity="0.6" /><polygon points="268.3,773.7 274.2,773.3 280.0,770.8 286.7,770.0 295.8,770.8 302.5,776.7 306.7,784.2 310.0,790.0 320.3,810.0 320.8,823.0 315.0,825.0 306.7,833.3 298.3,843.3 290.8,853.3 285.0,857.0 273.3,861.7 260.8,863.0 256.7,858.3 250.0,856.7 251.7,853.3 245.0,852.5 233.3,843.3 227.5,835.0 225.8,827.5 228.3,820.8 235.0,823.3 235.8,818.3 231.7,815.8 239.2,811.7 238.3,807.5 228.3,809.2 222.5,804.2 226.7,795.0 234.2,795.0 240.0,794.2 243.3,788.3 248.3,785.3 253.3,791.3 260.0,788.3 264.2,778.3 268.3,773.7" fill="#20954e" fill-opacity="0.6" /><polygon points="319.2,609.5 323.3,615.8 333.3,611.3 345.0,603.7 347.5,597.8 353.3,596.3 355.8,600.8 353.3,603.7 346.7,605.8 340.8,612.0 340.0,616.7 326.7,620.3 323.0,618.3" fill="#282828" /><polygon points="367.5,537.5 373.3,532.5 374.2,535.0 370.8,540.8" fill="#22984f" fill-opacity="0.6" /><polygon points="340.8,545.0 350.0,540.3 342.5,548.0" fill="#22984f" fill-opacity="0.6" /><polygon points="286.7,616.7 294.2,610.0 302.5,609.2 306.7,612.5 300.0,616.7 288.3,619.2" fill="#22984f" fill-opacity="0.6" /><polygon points="275.3,620.0 282.5,617.5 285.0,623.3 281.7,625.0" fill="#22984f" fill-opacity="0.6" /><polygon points="267.5,637.5 272.5,634.2 273.3,640.8 270.0,644.2" fill="#22984f" fill-opacity="0.6" /><polygon points="232.5,670.0 235.8,667.5 238.3,671.7 234.2,674.2" fill="#22984f" fill-opacity="0.6" /><polygon points="213.3,692.3 220.0,693.2 214.2,698.7" fill="#22984f" fill-opacity="0.6" /><polygon points="221.7,778.3 229.2,775.0 226.7,786.7 222.5,786.7" fill="#22984f" fill-opacity="0.6" /><polygon points="221.7,794.2 226.7,790.8 226.7,798.3 222.5,800.3" fill="#22984f" fill-opacity="0.6" /><polygon points="355.0,855.8 362.5,849.2 365.0,854.2 359.2,858.3" fill="#188847" fill-opacity="0.6" /><polygon points="357.5,860.0 363.3,857.5 362.5,863.3 358.3,865.3" fill="#188847" fill-opacity="0.6" /><polygon points="463.3,931.7 465.0,923.3 471.7,906.7 476.7,891.7 479.5,890.8 476.7,903.3 471.7,918.3 467.5,930.0" fill="#188847" fill-opacity="0.6" /><polygon points="500.8,882.5 506.7,873.3 511.7,869.2 521.7,866.3 520.0,875.0 515.8,878.3 516.7,886.7 512.5,895.0 506.7,900.0 507.5,905.0 501.7,907.0 502.5,893.3" fill="#188847" fill-opacity="0.6" /><polygon points="567.0,629.2 570.0,625.0 574.7,629.7 570.8,633.3" fill="#188847" fill-opacity="0.6" /><polygon points="641.7,538.3 649.2,535.8 650.0,541.7 644.2,543.0" fill="#188847" fill-opacity="0.6" /><polygon points="535.0,766.7 539.2,761.7 541.7,759.2 547.5,762.5 548.3,768.3 543.3,770.0 541.7,774.2 536.7,772.5" fill="#188847" fill-opacity="0.6" /><polygon points="582.5,761.7 584.2,755.8 587.5,762.0" fill="#188847" fill-opacity="0.6" /><polygon points="594.2,776.7 596.7,769.2 605.0,767.5 603.3,777.5" fill="#188847" fill-opacity="0.6" /><polygon points="618.3,812.5 628.3,808.3 637.5,801.7 643.3,802.5 650.0,799.2 661.7,798.7 666.7,796.3 678.3,795.3 685.0,798.3 690.0,798.3 695.8,801.7 706.7,802.5 713.3,804.2 720.8,802.5 722.5,805.8 717.5,809.2 713.3,818.3 708.3,826.7 704.2,830.0 706.7,838.3 707.5,848.3 710.8,860.0 710.0,865.0 712.5,867.5 707.5,869.2 708.3,872.5 705.0,875.8 701.7,881.7 694.2,879.2 687.5,882.0 680.8,880.0 678.3,875.8 673.3,870.0 654.2,860.0 638.3,866.7 640.0,856.7 642.5,850.8 640.8,847.5 637.5,847.5 636.7,851.7 633.3,852.5 628.3,849.2 623.3,843.3 620.0,835.0 617.5,823.3" fill="#188847" fill-opacity="0.6" /><polygon points="638.3,866.7 654.2,860.0 673.3,870.0 678.3,875.8 680.8,880.0 687.5,882.0 694.2,879.2 701.7,881.7 706.7,883.3 708.3,887.5 715.0,891.7 713.3,901.7 714.2,908.3 716.7,910.0 720.8,920.0 720.0,925.8 722.5,931.7 720.0,936.7 713.3,941.7 709.2,950.8 700.8,949.2 694.2,951.7 692.5,955.0 687.5,955.3 680.0,950.0 670.0,940.8 665.0,938.3 654.2,935.0 649.2,925.8 643.3,930.0 633.3,933.3 630.8,930.0 616.7,928.3 608.3,927.5 605.0,928.3 590.0,925.8 578.3,930.0 571.7,935.0 568.3,940.8 565.8,940.8 564.2,933.3 564.2,921.7 566.7,908.3 572.5,900.8 573.3,891.7 580.0,880.8 590.0,876.7 597.5,873.3 604.2,883.3 610.0,888.3 614.2,899.2 622.5,905.0 630.0,902.5 636.7,895.8 639.2,886.7 637.5,876.7" fill="#188847" fill-opacity="0.6" /><polygon points="565.8,940.8 568.3,940.8 571.7,935.0 578.3,930.0 590.0,925.8 605.0,928.3 608.3,927.5 616.7,928.3 630.8,930.0 633.3,933.3 643.3,930.0 649.2,925.8 654.2,935.0 665.0,938.3 670.0,940.8 680.0,950.0 687.5,955.3 686.7,961.7 683.3,969.2 691.7,970.0 688.3,975.0 680.8,976.7 677.5,982.5 670.8,985.0 667.5,991.7 668.3,996.7 664.2,1005.0 663.3,1009.2 656.7,1010.0 655.0,1013.3 648.3,1014.2 645.8,1020.0 642.5,1018.3 637.5,1022.5 633.3,1020.0 626.7,1021.7 620.0,1021.3 618.3,1011.7 615.0,1008.3 609.2,1006.7 607.5,1005.0 602.5,1004.2 601.3,996.7 604.2,991.7 603.3,984.2 598.3,980.0 588.3,980.3 578.3,975.0 571.7,971.7 568.3,960.0 566.3,950.0" fill="#188847" fill-opacity="0.6" /><polygon points="663.3,1010.5 665.8,1007.3 669.2,1012.7 665.0,1014.8" fill="#188847" fill-opacity="0.6" /><polygon points="595.8,823.3 599.2,817.0 606.7,822.5 607.5,827.5 601.7,833.3 597.5,832.5" fill="#188847" fill-opacity="0.6" /><polygon points="582.5,850.8 586.7,847.5 584.2,844.2 593.3,840.8 596.7,838.3 610.0,836.7 614.2,834.2 617.5,840.0 610.0,846.7 605.0,850.0 593.3,854.2 588.3,860.0" fill="#188847" fill-opacity="0.6" /><polygon points="100.0,1182.0 108.2,1174.0 109.0,1172.2 117.3,1166.3 129.0,1163.0 137.3,1158.0 139.0,1148.0 139.8,1132.2 149.0,1127.2 160.7,1123.8 169.8,1117.2 179.0,1113.8 185.7,1113.8 190.7,1116.3 198.2,1114.7 192.3,1111.3 183.2,1111.3 180.7,1108.0 187.3,1106.3 189.0,1099.7 195.7,1093.0 203.2,1079.7 206.5,1068.0 208.2,1058.0 210.7,1060.5 221.5,1053.0 224.8,1048.0 234.0,1042.2 254.8,1039.3 258.2,1043.0 259.0,1036.3 265.7,1031.7 279.8,1030.0 284.0,1033.8 282.3,1039.7 286.5,1042.2 287.3,1034.7 290.7,1035.5 294.8,1025.5 301.5,1026.3 297.3,1021.3 300.7,1017.2 294.8,1007.2 300.7,998.0 294.2,986.3 305.0,986.7 313.3,987.5 322.5,989.7 326.7,1001.3 335.0,1005.5 342.5,1005.5 347.5,1008.0 346.7,1013.0 340.3,1018.0 348.3,1020.5 355.8,1021.7 360.0,1015.5 370.0,1012.2 380.0,1006.3 390.0,1005.5 396.7,1011.3 405.0,1015.5 409.2,1023.0 407.5,1024.7 416.7,1030.5 417.5,1031.0 419.2,1038.0 420.8,1046.3 417.5,1053.8 414.2,1059.7 415.0,1063.8 423.3,1068.8 425.0,1074.7 423.3,1079.7 427.5,1086.3 427.5,1093.0 425.0,1098.0 429.2,1108.0 432.5,1111.3 434.2,1119.7 432.5,1126.3 438.3,1127.2 440.8,1132.2 448.3,1136.3 460.0,1138.0 464.2,1142.2 460.0,1147.2 465.8,1151.3 470.0,1158.0 475.0,1154.7 475.8,1148.0 481.7,1149.7 488.3,1153.0 492.5,1160.5 503.3,1163.0 510.0,1163.0 516.7,1173.7 520.0,1182.0" fill="#026b39" fill-opacity="0.6" /><polygon points="417.5,1031.0 423.3,1031.3 425.0,1026.3 422.5,1022.2 427.5,1018.8 446.7,1013.0 458.3,1008.8 466.7,999.7 476.7,995.5 485.0,991.3 498.3,988.3 506.7,988.8 511.7,1001.3 516.7,1004.7 526.7,1006.3 529.2,1009.7 537.5,1003.0 555.0,1005.5 578.3,1008.0 607.5,1005.0 609.2,1006.7 615.0,1008.3 618.3,1011.7 620.0,1021.3 620.0,1023.0 622.5,1033.0 625.0,1043.0 628.3,1051.3 627.5,1058.0 629.2,1064.7 626.7,1068.8 618.3,1073.0 615.0,1078.0 612.5,1083.0 620.0,1087.2 623.3,1091.3 621.7,1098.0 620.0,1102.2 623.3,1111.3 622.5,1116.3 627.5,1124.7 630.8,1130.5 633.3,1132.2 630.0,1134.7 632.5,1139.7 630.8,1146.3 625.0,1148.0 616.7,1155.5 610.0,1164.7 603.3,1173.7 598.0,1182.0 520.0,1182.0 516.7,1173.7 510.0,1163.0 503.3,1163.0 492.5,1160.5 488.3,1153.0 481.7,1149.7 475.8,1148.0 475.0,1154.7 470.0,1158.0 465.8,1151.3 460.0,1147.2 464.2,1142.2 460.0,1138.0 448.3,1136.3 440.8,1132.2 438.3,1127.2 432.5,1126.3 434.2,1119.7 432.5,1111.3 429.2,1108.0 425.0,1098.0 427.5,1093.0 427.5,1086.3 423.3,1079.7 425.0,1074.7 423.3,1068.8 415.0,1063.8 414.2,1059.7 417.5,1053.8 420.8,1046.3 419.2,1038.0" fill="#249851" fill-opacity="0.6" /><polygon points="525.5,1005.3 536.5,1001.2 537.5,1003.0 529.2,1009.7" fill="#249851" fill-opacity="0.6" /><polygon points="392.5,1007.5 398.0,995.0 403.3,1006.7 397.5,1008.3" fill="#026b39" fill-opacity="0.6" /><polygon points="62.0,1176.0 66.0,1173.0 72.3,1171.2 77.3,1174.0 79.0,1176.0" fill="#026b39" fill-opacity="0.6" /><polygon points="323.3,879.2 331.7,878.3 336.7,885.0 335.0,895.0 331.7,903.3 328.3,905.0 332.5,916.7 335.0,922.5 341.7,922.5 344.7,927.5 340.0,935.0 331.7,936.7 328.3,943.3 329.2,955.0 321.7,961.7 316.7,964.2 319.2,970.8 314.2,975.0 316.7,980.8 319.2,984.2 313.3,987.5 305.0,986.7 294.2,986.3 295.8,976.7 294.2,963.3 286.7,958.3 283.3,950.0 285.8,940.0 283.3,926.7 283.3,917.8 290.0,917.4 285.5,911.5 289.4,902.7 295.8,899.2 306.7,898.3 314.2,893.3 318.3,885.0" fill="#188847" fill-opacity="0.6" /><polygon points="296.0,907.1 306.0,903.0 307.3,906.0 304.7,910.8 310.2,917.6 304.9,913.7 299.9,916.5 291.6,917.8 290.5,914.9" fill="#282828" /><polygon points="292.7,914.3 295.5,908.8 298.8,908.2 297.7,913.7 294.4,915.6" fill="#188847" fill-opacity="0.6" /><polygon points="321.7,961.7 328.3,958.3 333.3,960.0 338.3,965.0 339.2,976.7 335.0,980.8 328.3,977.5 323.3,973.3 319.2,966.7" fill="#188847" fill-opacity="0.6" /><polygon points="315.0,980.0 321.7,979.2 324.2,985.0 318.3,986.7" fill="#188847" fill-opacity="0.6" /><polygon points="338.3,985.8 340.8,984.2 340.0,991.7" fill="#188847" fill-opacity="0.6" /><polygon points="348.3,956.7 360.0,946.7 363.3,953.3 367.5,945.0 375.0,938.3 377.5,940.0 375.0,946.7 371.7,953.3 373.3,960.0 371.7,966.7 373.3,975.0 368.3,982.5 363.3,983.3 356.7,981.7 350.0,984.2 340.0,979.2 340.8,970.0 350.0,966.7 347.5,960.0" fill="#188847" fill-opacity="0.6" /><polygon points="346.7,985.8 354.2,984.2 356.7,987.5 361.7,985.8 364.2,993.3 356.7,996.7 350.0,993.3 345.8,990.8" fill="#188847" fill-opacity="0.6" /><polygon points="363.3,986.7 368.3,985.0 370.8,988.3 366.7,993.3" fill="#188847" fill-opacity="0.6" /><polygon points="426.7,975.0 430.8,973.3 437.5,977.5 435.8,982.5 427.5,980.0" fill="#188847" fill-opacity="0.6" /><polyline points="507.5,514.0 526.7,526.7 529.5,533.3 535.0,529.7 540.5,520.8 561.7,529.2 570.0,531.7 576.2,536.7" fill="none"/><polyline points="373.3,672.5 385.8,680.0 394.2,687.5 402.5,702.5 408.3,704.7 425.0,707.5 426.7,710.8 436.7,710.5 445.0,720.0 450.0,728.3 457.5,733.3 463.3,742.5 459.2,753.3 463.8,761.3 470.7,769.7 481.7,764.7 485.0,749.8" fill="none"/><polyline points="366.7,881.7 374.2,880.0 377.5,890.8 383.3,888.3 387.5,895.8 392.5,900.0 400.0,898.7 408.3,904.2 419.2,900.8 420.0,897.5 430.0,894.2 435.0,896.3 445.0,894.2 450.0,903.3 445.0,906.7 444.2,913.3 440.8,914.2 441.7,922.5 451.7,930.8 455.0,931.7" fill="none"/><polyline points="296.0,907.1 308.2,903.2 321.5,900.5 327.0,901.6 330.9,903.2" fill="none"/><polyline points="258.2,1043.0 262.3,1044.7 263.2,1054.7 259.8,1064.7 259.0,1068.8 251.5,1070.5 252.3,1075.5 259.0,1078.8 258.2,1084.7 252.3,1089.7 253.2,1094.7 244.8,1097.7 235.7,1098.0 237.3,1103.0 241.5,1109.7 239.0,1119.7 235.7,1123.0 234.0,1128.0 238.2,1131.3 236.5,1135.5" fill="none"/><polyline points="179.0,1114.7 180.7,1118.8 185.7,1117.2 191.5,1119.7 198.2,1114.7 204.0,1110.5 208.2,1112.2 213.2,1111.3 219.0,1114.7 226.5,1118.8 232.3,1121.3 233.2,1124.7 229.8,1134.7 236.5,1135.5" fill="none"/><polyline points="236.5,1135.5 240.7,1143.0 244.8,1148.0 241.5,1154.7 235.7,1157.2 231.5,1164.7 232.3,1173.7 232.5,1182.0" fill="none"/><polyline points="160.7,1123.8 163.2,1131.3 168.2,1136.3 174.0,1133.8 177.3,1142.2 184.0,1144.7 192.3,1146.3 195.7,1154.7 198.2,1162.2 204.0,1163.0 209.0,1160.5 211.5,1166.3 219.0,1171.3 221.5,1173.7 223.0,1182.0" fill="none"/><polyline points="432.5,1126.3 431.7,1131.3 426.7,1131.7 423.3,1127.2 418.3,1125.5 416.7,1129.7 410.0,1134.7 403.3,1136.3 396.7,1142.2 389.2,1143.8 388.3,1147.2 378.3,1148.0 372.5,1158.0 380.0,1163.0 377.5,1171.3 378.3,1182.0" fill="none"/></g><g font-family="'DejaVu Sans Mono','Liberation Mono',monospace" font-size="14.67" fill="#f4faf6" text-anchor="middle"><rect x="343.8" y="554.0" width="53.1" height="39.3" fill="#22984f" fill-opacity="0.6"/><text transform="translate(370.3,569.85) rotate(0.15)">NO3</text><text transform="translate(370.3,588.90) rotate(0.15)">49.66€</text><rect x="432.8" y="570.2" width="53.1" height="39.3" fill="#188847" fill-opacity="0.6"/><text transform="translate(459.3,586.15) rotate(0.15)">SE2</text><text transform="translate(459.3,605.20) rotate(0.15)">30.29€</text><rect x="678.2" y="605.6" width="53.1" height="39.3" fill="#188847" fill-opacity="0.6"/><text transform="translate(704.7,621.55) rotate(0.15)">FI</text><text transform="translate(704.7,640.60) rotate(0.15)">30.29€</text><rect x="222.9" y="711.0" width="53.1" height="39.3" fill="#22984f" fill-opacity="0.6"/><text transform="translate(249.5,726.85) rotate(0.15)">NO5</text><text transform="translate(249.5,745.90) rotate(0.15)">49.66€</text><rect x="314.2" y="703.1" width="53.1" height="39.3" fill="#20954e" fill-opacity="0.6"/><text transform="translate(340.8,718.95) rotate(0.15)">NO1</text><text transform="translate(340.8,738.00) rotate(0.15)">44.61€</text><rect x="250.1" y="796.4" width="53.1" height="39.3" fill="#20954e" fill-opacity="0.6"/><text transform="translate(276.7,812.25) rotate(0.15)">NO2</text><text transform="translate(276.7,831.30) rotate(0.15)">44.61€</text><rect x="394.9" y="787.6" width="53.1" height="39.3" fill="#188847" fill-opacity="0.6"/><text transform="translate(421.5,803.55) rotate(0.15)">SE3</text><text transform="translate(421.5,822.60) rotate(0.15)">30.29€</text><rect x="657.2" y="818.1" width="53.1" height="39.3" fill="#188847" fill-opacity="0.6"/><text transform="translate(683.7,833.95) rotate(0.15)">EE</text><text transform="translate(683.7,853.00) rotate(0.15)">30.29€</text><rect x="277.9" y="924.0" width="53.1" height="39.3" fill="#188847" fill-opacity="0.6"/><text transform="translate(304.5,939.85) rotate(0.15)">DK1</text><text transform="translate(304.5,958.90) rotate(0.15)">30.29€</text><rect x="377.1" y="911.9" width="53.1" height="39.3" fill="#188847" fill-opacity="0.6"/><text transform="translate(403.7,927.75) rotate(0.15)">SE4</text><text transform="translate(403.7,946.80) rotate(0.15)">30.29€</text><rect x="338.2" y="945.9" width="53.1" height="39.3" fill="#188847" fill-opacity="0.6"/><text transform="translate(364.8,961.75) rotate(0.15)">DK2</text><text transform="translate(364.8,980.80) rotate(0.15)">30.29€</text><rect x="661.2" y="898.4" width="53.1" height="39.3" fill="#188847" fill-opacity="0.6"/><text transform="translate(687.7,914.25) rotate(0.15)">LV</text><text transform="translate(687.7,933.30) rotate(0.15)">30.29€</text><rect x="606.0" y="958.1" width="53.1" height="39.3" fill="#188847" fill-opacity="0.6"/><text transform="translate(632.5,973.95) rotate(0.15)">LT</text><text transform="translate(632.5,993.00) rotate(0.15)">30.29€</text><rect x="199.0" y="1065.4" width="44.25" height="39.3" fill="#026b39" fill-opacity="0.6"/><text transform="translate(221.1,1081.35) rotate(0.15)">NL</text><text transform="translate(221.1,1100.40) rotate(0.15)">0.05€</text><rect x="185.5" y="1116.6" width="44.25" height="39.3" fill="#026b39" fill-opacity="0.6"/><text transform="translate(207.6,1132.55) rotate(0.15)">BE</text><text transform="translate(207.6,1151.60) rotate(0.15)">0.05€</text><rect x="295.8" y="1102.5" width="44.25" height="39.3" fill="#026b39" fill-opacity="0.6"/><text transform="translate(317.9,1118.45) rotate(0.15)">DE_LU</text><text transform="translate(317.9,1137.50) rotate(0.15)">0.05€</text><rect x="525.8" y="1076.4" width="53.1" height="39.3" fill="#249851" fill-opacity="0.6"/><text transform="translate(552.3,1092.35) rotate(0.15)">PL</text><text transform="translate(552.3,1111.40) rotate(0.15)">52.49€</text><rect x="395.6" y="1150.0" width="44.25" height="39.3" fill="#026b39" fill-opacity="0.6"/><text transform="translate(417.7,1165.95) rotate(0.15)">CZ</text><text transform="translate(417.7,1185.00) rotate(0.15)">0.05€</text></g></svg>
</div>
<div class="abs" style="left:19px;top:515.8px;width:226.5px;height:25.8px;background:#7f7f7f;font-family:'DejaVu Sans Mono','Liberation Mono',monospace;font-size:19.8px;line-height:26.8px;color:#0a0a0a;white-space:pre">2024-03-28 14:00:00</div>
<div class="panel" style="left:815px;top:471.4px;width:1120px;height:720px;border-radius:3px"></div>
<div class="t" style="left:824.50px;top:482.95px;font-size:15.5px;letter-spacing:0.501px;color:#d5d6e2;-webkit-text-stroke:.3px #d5d6e2;transform:rotate(.04deg);transform-origin:0 50%;">Euro Day Ahead Prices Histogram - energygraph.info</div>
<svg class="abs" style="left:800px;top:500px" width="1120" height="674" viewBox="800 500 1120 674"><line x1="862.4" y1="524.6" x2="862.4" y2="1174" stroke="#25282d" stroke-width="1"/><line x1="924.4" y1="524.6" x2="924.4" y2="1174" stroke="#25282d" stroke-width="1"/><line x1="986.4" y1="524.6" x2="986.4" y2="1174" stroke="#25282d" stroke-width="1"/><line x1="1048.4" y1="524.6" x2="1048.4" y2="1174" stroke="#25282d" stroke-width="1"/><line x1="1110.4" y1="524.6" x2="1110.4" y2="1174" stroke="#25282d" stroke-width="1"/><line x1="1172.4" y1="524.6" x2="1172.4" y2="1174" stroke="#25282d" stroke-width="1"/><line x1="1234.4" y1="524.6" x2="1234.4" y2="1174" stroke="#25282d" stroke-width="1"/><line x1="1296.4" y1="524.6" x2="1296.4" y2="1174" stroke="#25282d" stroke-width="1"/><line x1="1358.4" y1="524.6" x2="1358.4" y2="1174" stroke="#25282d" stroke-width="1"/><line x1="1420.4" y1="524.6" x2="1420.4" y2="1174" stroke="#25282d" stroke-width="1"/><line x1="1482.4" y1="524.6" x2="1482.4" y2="1174" stroke="#25282d" stroke-width="1"/><line x1="1544.4" y1="524.6" x2="1544.4" y2="1174" stroke="#25282d" stroke-width="1"/><line x1="1606.4" y1="524.6" x2="1606.4" y2="1174" stroke="#25282d" stroke-width="1"/><line x1="1668.4" y1="524.6" x2="1668.4" y2="1174" stroke="#25282d" stroke-width="1"/><line x1="1730.4" y1="524.6" x2="1730.4" y2="1174" stroke="#25282d" stroke-width="1"/><line x1="1792.4" y1="524.6" x2="1792.4" y2="1174" stroke="#25282d" stroke-width="1"/><line x1="1854.4" y1="524.6" x2="1854.4" y2="1174" stroke="#25282d" stroke-width="1"/><line x1="1916.4" y1="524.6" x2="1916.4" y2="1174" stroke="#25282d" stroke-width="1"/><line x1="858.8" y1="524.6" x2="1916.3" y2="524.6" stroke="#25282d" stroke-width="1"/><line x1="858.8" y1="561.7" x2="1916.3" y2="561.7" stroke="#25282d" stroke-width="1"/><line x1="858.8" y1="598.8" x2="1916.3" y2="598.8" stroke="#25282d" stroke-width="1"/><line x1="858.8" y1="636.0" x2="1916.3" y2="636.0" stroke="#25282d" stroke-width="1"/><line x1="858.8" y1="673.1" x2="1916.3" y2="673.1" stroke="#25282d" stroke-width="1"/><line x1="858.8" y1="710.2" x2="1916.3" y2="710.2" stroke="#25282d" stroke-width="1"/><line x1="858.8" y1="747.3" x2="1916.3" y2="747.3" stroke="#25282d" stroke-width="1"/><line x1="858.8" y1="784.4" x2="1916.3" y2="784.4" stroke="#25282d" stroke-width="1"/><line x1="858.8" y1="821.5" x2="1916.3" y2="821.5" stroke="#25282d" stroke-width="1"/><line x1="858.8" y1="858.7" x2="1916.3" y2="858.7" stroke="#25282d" stroke-width="1"/><line x1="858.8" y1="895.8" x2="1916.3" y2="895.8" stroke="#25282d" stroke-width="1"/><line x1="858.8" y1="932.9" x2="1916.3" y2="932.9" stroke="#25282d" stroke-width="1"/><line x1="858.8" y1="970.0" x2="1916.3" y2="970.0" stroke="#25282d" stroke-width="1"/><line x1="858.8" y1="1007.1" x2="1916.3" y2="1007.1" stroke="#25282d" stroke-width="1"/><line x1="858.8" y1="1044.2" x2="1916.3" y2="1044.2" stroke="#25282d" stroke-width="1"/><line x1="858.8" y1="1081.4" x2="1916.3" y2="1081.4" stroke="#25282d" stroke-width="1"/><line x1="858.8" y1="1118.5" x2="1916.3" y2="1118.5" stroke="#25282d" stroke-width="1"/><line x1="858.8" y1="1155.6" x2="1916.3" y2="1155.6" stroke="#25282d" stroke-width="1"/><line x1="858.8" y1="1192.7" x2="1916.3" y2="1192.7" stroke="#25282d" stroke-width="1"/><rect x="904.30" y="1119.5" width="18.67" height="81.5" fill="#5794f2" fill-opacity="0.66" stroke="#5794f2" stroke-width="1"/><rect x="1007.63" y="971.0" width="18.67" height="230.0" fill="#5794f2" fill-opacity="0.66" stroke="#5794f2" stroke-width="1"/><rect x="1028.30" y="703.8" width="18.67" height="497.2" fill="#5794f2" fill-opacity="0.66" stroke="#5794f2" stroke-width="1"/><rect x="1048.97" y="599.8" width="18.67" height="601.2" fill="#5794f2" fill-opacity="0.66" stroke="#5794f2" stroke-width="1"/><rect x="1069.63" y="1015.6" width="18.67" height="185.4" fill="#5794f2" fill-opacity="0.66" stroke="#5794f2" stroke-width="1"/><rect x="904.30" y="807.7" width="18.67" height="393.3" fill="#c25e1d" fill-opacity="0.66" stroke="#c2621d" stroke-width="1"/><rect x="924.97" y="1104.6" width="18.67" height="96.4" fill="#c25e1d" fill-opacity="0.66" stroke="#c2621d" stroke-width="1"/><rect x="945.63" y="837.4" width="18.67" height="363.6" fill="#c25e1d" fill-opacity="0.66" stroke="#c2621d" stroke-width="1"/><rect x="966.30" y="792.8" width="18.67" height="408.2" fill="#c25e1d" fill-opacity="0.66" stroke="#c2621d" stroke-width="1"/><rect x="986.97" y="926.5" width="18.67" height="274.5" fill="#c25e1d" fill-opacity="0.66" stroke="#c2621d" stroke-width="1"/><rect x="1007.63" y="1149.2" width="18.67" height="51.8" fill="#c25e1d" fill-opacity="0.66" stroke="#c2621d" stroke-width="1"/><rect x="1028.30" y="1015.6" width="18.67" height="185.4" fill="#c25e1d" fill-opacity="0.66" stroke="#c2621d" stroke-width="1"/></svg>
<div class="t" style="left:452.40px;width:399.88px;text-align:right;top:516.90px;font-size:13.8px;letter-spacing:-0.118px;color:#c8c9d6;">55</div>
<div class="t" style="left:452.40px;width:399.99px;text-align:right;top:554.90px;font-size:13.8px;letter-spacing:-0.014px;color:#c8c9d6;">52.5</div>
<div class="t" style="left:452.40px;width:399.88px;text-align:right;top:591.90px;font-size:13.8px;letter-spacing:-0.118px;color:#c8c9d6;">50</div>
<div class="t" style="left:452.40px;width:399.75px;text-align:right;top:628.90px;font-size:13.8px;letter-spacing:-0.247px;color:#c8c9d6;">47.5</div>
<div class="t" style="left:452.40px;width:399.88px;text-align:right;top:665.90px;font-size:13.8px;letter-spacing:-0.118px;color:#c8c9d6;">45</div>
<div class="t" style="left:452.40px;width:399.99px;text-align:right;top:702.90px;font-size:13.8px;letter-spacing:-0.014px;color:#c8c9d6;">42.5</div>
<div class="t" style="left:452.40px;width:399.88px;text-align:right;top:739.90px;font-size:13.8px;letter-spacing:-0.118px;color:#c8c9d6;">40</div>
<div class="t" style="left:452.40px;width:399.75px;text-align:right;top:776.90px;font-size:13.8px;letter-spacing:-0.247px;color:#c8c9d6;">37.5</div>
<div class="t" style="left:452.40px;width:399.88px;text-align:right;top:813.90px;font-size:13.8px;letter-spacing:-0.118px;color:#c8c9d6;">35</div>
<div class="t" style="left:452.40px;width:399.99px;text-align:right;top:851.90px;font-size:13.8px;letter-spacing:-0.014px;color:#c8c9d6;">32.5</div>
<div class="t" style="left:452.40px;width:399.88px;text-align:right;top:888.90px;font-size:13.8px;letter-spacing:-0.118px;color:#c8c9d6;">30</div>
<div class="t" style="left:452.40px;width:399.75px;text-align:right;top:925.90px;font-size:13.8px;letter-spacing:-0.247px;color:#c8c9d6;">27.5</div>
<div class="t" style="left:452.40px;width:399.88px;text-align:right;top:962.90px;font-size:13.8px;letter-spacing:-0.118px;color:#c8c9d6;">25</div>
<div class="t" style="left:452.40px;width:399.99px;text-align:right;top:999.90px;font-size:13.8px;letter-spacing:-0.014px;color:#c8c9d6;">22.5</div>
<div class="t" style="left:452.40px;width:399.88px;text-align:right;top:1036.90px;font-size:13.8px;letter-spacing:-0.118px;color:#c8c9d6;">20</div>
<div class="t" style="left:452.40px;width:399.02px;text-align:right;top:1073.90px;font-size:13.8px;letter-spacing:-0.980px;color:#c8c9d6;">17.5</div>
<div class="t" style="left:452.40px;width:397.68px;text-align:right;top:1110.90px;font-size:13.8px;letter-spacing:-2.318px;color:#c8c9d6;">15</div>
<div class="t" style="left:452.40px;width:399.25px;text-align:right;top:1147.90px;font-size:13.8px;letter-spacing:-0.747px;color:#c8c9d6;">12.5</div>
</div></body></html>
